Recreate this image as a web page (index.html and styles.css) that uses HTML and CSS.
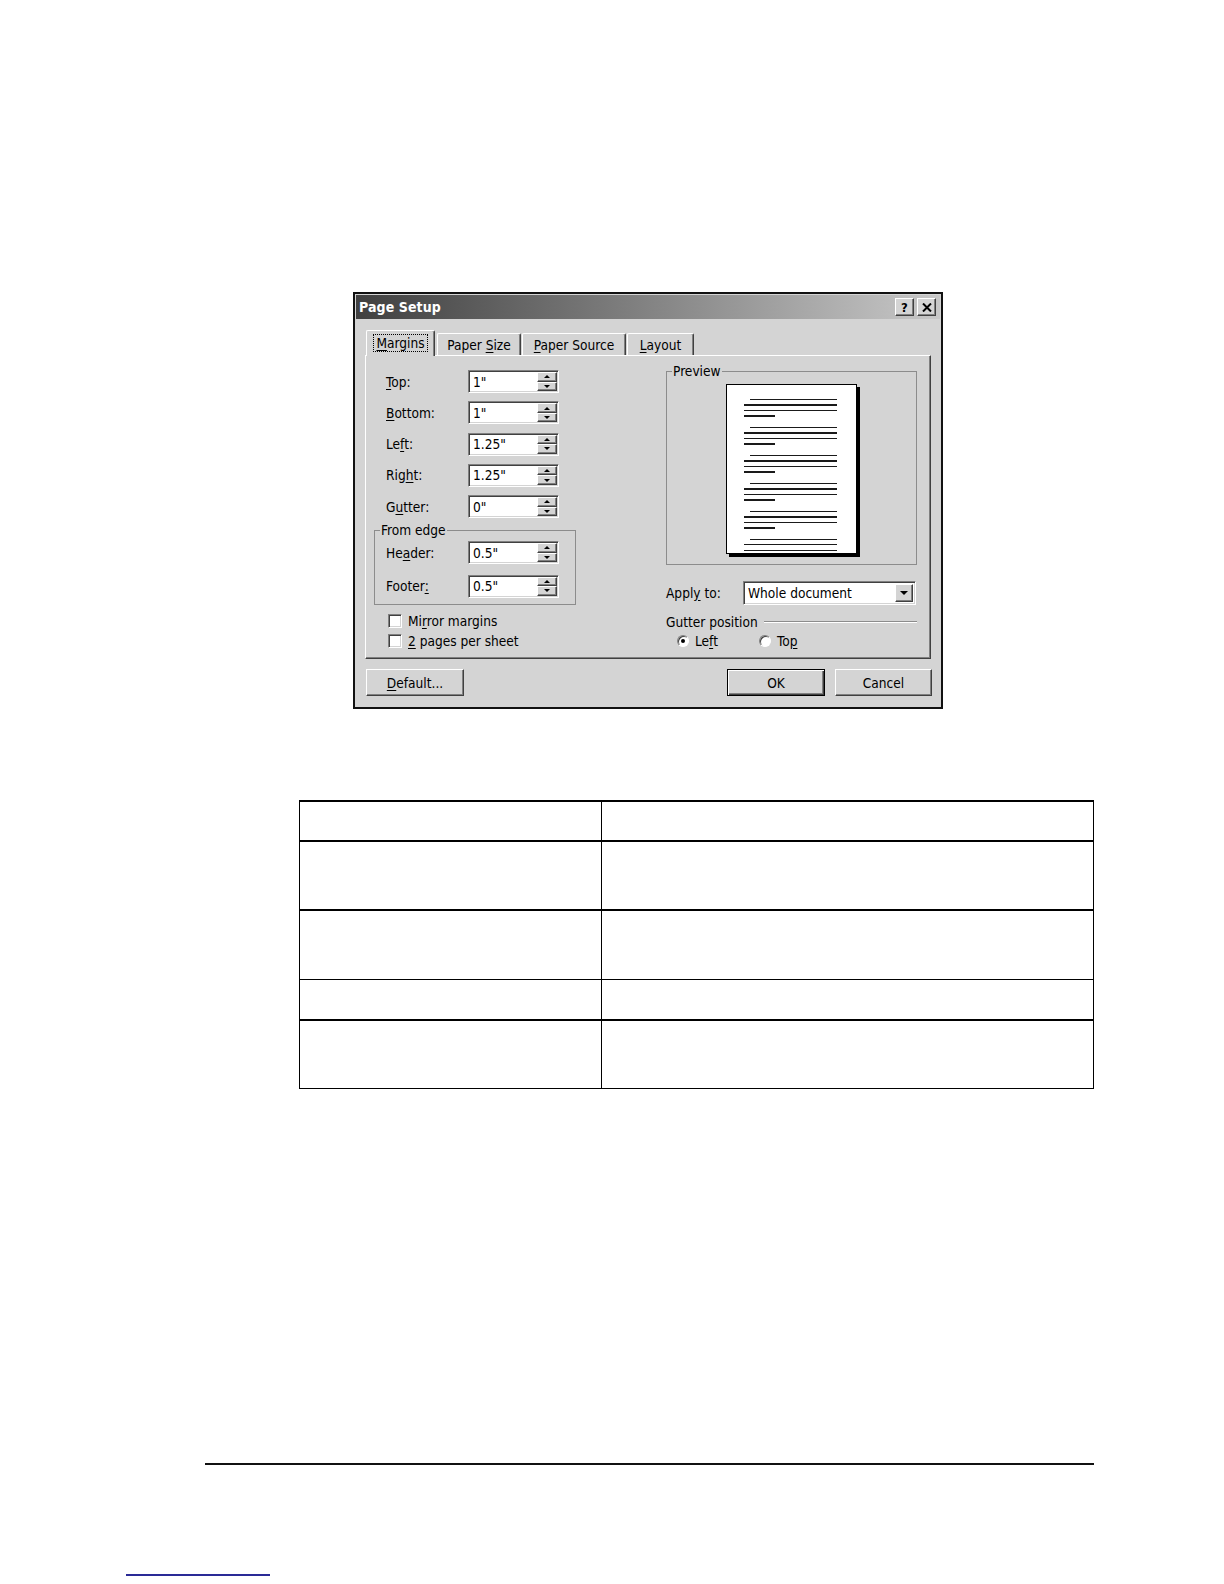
FILE: index.html
```html
<!DOCTYPE html>
<html>
<head>
<meta charset="utf-8">
<title>Page Setup</title>
<link rel="stylesheet" href="styles.css">
</head>
<body>
<div class="sheet">
  <div class="dialog">
    <div class="titlebar">
      <span class="title">Page Setup</span>
      <div class="tb-buttons">
        <span class="tb-btn help">?</span>
        <span class="tb-btn close"><svg width="10" height="9" viewBox="0 0 10 9"><path d="M1 0.5 L9 8.5 M9 0.5 L1 8.5" stroke="#000" stroke-width="2"/></svg></span>
      </div>
    </div>
    <div class="dlg-body">
      <div class="tabs">
        <div class="tab active w69"><span class="focus"><u>M</u>argins</span></div>
        <div class="tab w84 g2"><span>Paper <u>S</u>ize</span></div>
        <div class="tab w104 g1"><span><u>P</u>aper Source</span></div>
        <div class="tab w67 g1"><span><u>L</u>ayout</span></div>
      </div>
      <div class="panel">
        <div class="col-left">
          <div class="fields">
            <div class="field"><span class="lbl"><u>T</u>op:</span><div class="spin"><span class="val">1"</span><div class="spin-btns"><span class="sb up"></span><span class="sb down"></span></div></div></div>
            <div class="field"><span class="lbl"><u>B</u>ottom:</span><div class="spin"><span class="val">1"</span><div class="spin-btns"><span class="sb up"></span><span class="sb down"></span></div></div></div>
            <div class="field"><span class="lbl">Le<u>f</u>t:</span><div class="spin"><span class="val">1.25"</span><div class="spin-btns"><span class="sb up"></span><span class="sb down"></span></div></div></div>
            <div class="field"><span class="lbl">Rig<u>h</u>t:</span><div class="spin"><span class="val">1.25"</span><div class="spin-btns"><span class="sb up"></span><span class="sb down"></span></div></div></div>
            <div class="field"><span class="lbl">G<u>u</u>tter:</span><div class="spin"><span class="val">0"</span><div class="spin-btns"><span class="sb up"></span><span class="sb down"></span></div></div></div>
          </div>
          <fieldset class="group edge">
            <legend>From edge</legend>
            <div class="edge-fields">
              <div class="field"><span class="lbl">He<u>a</u>der:</span><div class="spin"><span class="val">0.5"</span><div class="spin-btns"><span class="sb up"></span><span class="sb down"></span></div></div></div>
              <div class="field"><span class="lbl">Footer<u>:</u></span><div class="spin"><span class="val">0.5"</span><div class="spin-btns"><span class="sb up"></span><span class="sb down"></span></div></div></div>
            </div>
          </fieldset>
          <div class="checks">
            <div class="check"><span class="cbox"></span><span>Mi<u>r</u>ror margins</span></div>
            <div class="check"><span class="cbox"></span><span><u>2</u> pages per sheet</span></div>
          </div>
        </div>
        <div class="col-right">
          <fieldset class="group preview">
            <legend>Preview</legend>
            <div class="page-wrap">
              <div class="page">
                <div class="para"><i class="ln ind"></i><i class="ln"></i><i class="ln"></i><i class="ln short"></i></div>
                <div class="para"><i class="ln ind"></i><i class="ln"></i><i class="ln"></i><i class="ln short"></i></div>
                <div class="para"><i class="ln ind"></i><i class="ln"></i><i class="ln"></i><i class="ln short"></i></div>
                <div class="para"><i class="ln ind"></i><i class="ln"></i><i class="ln"></i><i class="ln short"></i></div>
                <div class="para"><i class="ln ind"></i><i class="ln"></i><i class="ln"></i><i class="ln short"></i></div>
                <div class="para"><i class="ln ind"></i><i class="ln"></i><i class="ln"></i></div>
              </div>
            </div>
          </fieldset>
          <div class="apply">
            <span class="apply-lbl">Appl<u>y</u> to:</span>
            <div class="combo"><span class="val">Whole document</span><span class="combo-btn"></span></div>
          </div>
          <div class="gutter-pos"><span>Gutter position</span><span class="rule"></span></div>
          <div class="radios">
            <div class="radio first"><span class="rbtn on"></span><span>Le<u>f</u>t</span></div>
            <div class="radio"><span class="rbtn"></span><span>To<u>p</u></span></div>
          </div>
        </div>
      </div>
      <div class="buttons">
        <span class="btn default-btn"><span><u>D</u>efault...</span></span>
        <span class="spacer"></span>
        <span class="btn ok">OK</span>
        <span class="btn cancel">Cancel</span>
      </div>
    </div>
  </div>

  <table class="grid">
    <tr class="r1"><td class="c1"></td><td class="c2"></td></tr>
    <tr class="r2"><td class="c1"></td><td class="c2"></td></tr>
    <tr class="r3"><td class="c1"></td><td class="c2"></td></tr>
    <tr class="r4"><td class="c1"></td><td class="c2"></td></tr>
    <tr class="r5"><td class="c1"></td><td class="c2"></td></tr>
  </table>

  <div class="footer-rule"></div>
  <div class="blue-rule"></div>
</div>
</body>
</html>
```

FILE: styles.css
```css
* { box-sizing: border-box; }

html, body {
  margin: 0;
  padding: 0;
  background: #fff;
}

.sheet {
  width: 1224px;
  height: 1584px;
  padding-top: 292px;
  overflow: hidden;
  font-family: "DejaVu Sans Condensed", "DejaVu Sans", sans-serif;
  font-stretch: condensed;
  font-size: 13.6px;
  color: #000;
}

u { text-decoration: underline; text-underline-offset: 2px; }

/* ---------- dialog ---------- */
.dialog {
  margin-left: 353px;
  width: 590px;
  height: 417px;
  border: 2px solid #111;
  padding: 1px;
  background: #d4d4d4;
}

.titlebar {
  height: 24px;
  display: flex;
  align-items: center;
  padding: 0 4px 0 3px;
  background: linear-gradient(to right, #404040 0%, #7c7c7c 45%, #c8c8c8 100%);
}

.title {
  flex: 1;
  color: #fff;
  font-weight: bold;
  font-size: 14px;
  letter-spacing: 0.1px;
}

.tb-buttons {
  display: flex;
  gap: 3px;
}

.tb-btn {
  width: 19px;
  height: 18px;
  display: flex;
  align-items: center;
  justify-content: center;
  background: #d4d4d4;
  border: 1px solid;
  border-color: #fff #404040 #404040 #fff;
  box-shadow: inset -1px -1px 0 #808080;
  font-weight: bold;
  font-size: 13px;
  line-height: 1;
}

.dlg-body {
  padding: 11px 0 0 9px;
}

/* ---------- tabs ---------- */
.tabs {
  display: flex;
  align-items: flex-end;
  height: 25px;
  margin-left: 1px;
  position: relative;
  z-index: 1;
}

.tab {
  height: 22px;
  display: flex;
  align-items: center;
  justify-content: center;
  background: #d4d4d4;
  border-top: 1px solid #fff;
  border-left: 1px solid #fff;
  border-right: 1px solid #404040;
  box-shadow: inset -1px 0 0 #808080;
  border-radius: 2px 2px 0 0;
  padding-top: 1px;
}

.tab.active {
  height: 26px;
  margin-bottom: -1px;
  padding-bottom: 2px;
}

.w69 { width: 69px; }
.w67 { width: 67px; }
.w84 { width: 84px; }
.w104 { width: 104px; }
.g1 { margin-left: 1px; }
.g2 { margin-left: 2px; }

.focus {
  outline: 1px dotted #000;
  outline-offset: 0;
  padding: 0 2px;
}

/* ---------- panel ---------- */
.panel {
  width: 566px;
  height: 304px;
  display: flex;
  padding-left: 8px;
  border: 1px solid;
  border-color: #fff #404040 #404040 #fff;
  box-shadow: inset -1px -1px 0 #808080;
}

.col-left {
  width: 202px;
  padding-top: 14px;
}

.col-right {
  width: 251px;
  margin-left: 90px;
  padding-top: 7px;
}

.fields {
  display: flex;
  flex-direction: column;
  gap: 8.3px;
  padding-left: 12px;
}

.field {
  display: flex;
  align-items: center;
  height: 23px;
}

.lbl {
  width: 82px;
}

.spin {
  width: 91px;
  height: 23px;
  display: flex;
  align-items: center;
  background: #fff;
  border: 1px solid;
  border-color: #808080 #fff #fff #808080;
  box-shadow: inset 1px 1px 0 #404040, inset -1px -1px 0 #d4d4d4;
  padding: 1px 1px 1px 4px;
}

.val {
  flex: 1;
}

.spin-btns {
  width: 20px;
  height: 19px;
  display: flex;
  flex-direction: column;
}

.sb {
  flex: 1;
  background: #d4d4d4;
  border: 1px solid;
  border-color: #fff #404040 #404040 #fff;
  box-shadow: inset -1px -1px 0 #808080;
  display: flex;
  align-items: center;
  justify-content: center;
}

.sb::after {
  content: "";
  width: 0;
  height: 0;
  border-left: 3.5px solid transparent;
  border-right: 3.5px solid transparent;
}

.sb.up::after { border-bottom: 3.5px solid #000; }
.sb.down::after { border-top: 3.5px solid #000; }

/* group boxes */
.group {
  margin: 0;
  padding: 0;
  min-width: 0;
  border: 1px solid #8c8c8c;
}

.group legend {
  padding: 0 1px;
  margin-left: 5px;
  line-height: 16px;
}

.edge {
  margin-top: 4px;
  width: 202px;
  padding: 3px 0 6px 11px;
}

.edge legend {
  margin-left: -6px;
}

.edge-fields {
  display: flex;
  flex-direction: column;
  gap: 10.5px;
}

.checks {
  margin-top: 8px;
  padding-left: 14px;
  display: flex;
  flex-direction: column;
  gap: 4px;
}

.check {
  display: flex;
  align-items: center;
  height: 16px;
  gap: 6px;
}

.cbox {
  width: 14px;
  height: 14px;
  background: #fff;
  border: 1px solid;
  border-color: #808080 #fff #fff #808080;
  box-shadow: inset 1px 1px 0 #404040, inset -1px -1px 0 #d4d4d4;
}

/* preview */
.preview {
  width: 251px;
  padding: 5px 0 7px 0;
}

.page-wrap {
  display: flex;
  justify-content: center;
  height: 173px;
}

.page {
  width: 131px;
  height: 170px;
  background: #fff;
  border: 1px solid #000;
  box-shadow: 3px 3px 0 #000;
  padding: 14px 0 0 17px;
  display: flex;
  flex-direction: column;
  gap: 10.2px;
}

.para {
  display: flex;
  flex-direction: column;
  gap: 4.2px;
}

.ln {
  display: block;
  width: 93px;
  height: 1.3px;
  background: #1a1a1a;
}

.ln.ind { width: 87px; margin-left: 6px; }
.ln.short { width: 31px; }

.apply {
  margin-top: 16px;
  display: flex;
  align-items: center;
  height: 24px;
}

.apply-lbl { width: 77px; }

.combo {
  width: 173px;
  height: 24px;
  display: flex;
  align-items: center;
  background: #fff;
  border: 1px solid;
  border-color: #808080 #fff #fff #808080;
  box-shadow: inset 1px 1px 0 #404040, inset -1px -1px 0 #d4d4d4;
  padding: 2px 2px 2px 4px;
}

.combo-btn {
  width: 18px;
  height: 18px;
  background: #d4d4d4;
  border: 1px solid;
  border-color: #fff #404040 #404040 #fff;
  box-shadow: inset -1px -1px 0 #808080;
  display: flex;
  align-items: center;
  justify-content: center;
}

.combo-btn::after {
  content: "";
  border-left: 4px solid transparent;
  border-right: 4px solid transparent;
  border-top: 4px solid #000;
}

.gutter-pos {
  margin-top: 9px;
  height: 16px;
  display: flex;
  align-items: center;
}

.gutter-pos .rule {
  flex: 1;
  margin-left: 6px;
  border-top: 1px solid #8c8c8c;
  border-bottom: 1px solid #fff;
  height: 2px;
}

.radios {
  margin-top: 3px;
  height: 16px;
  display: flex;
  align-items: center;
  padding-left: 11px;
}

.radio {
  display: flex;
  align-items: center;
  gap: 6px;
}

.radio.first { width: 82px; }

.rbtn {
  width: 12px;
  height: 12px;
  border-radius: 50%;
  background: #fff;
  border: 1px solid;
  border-color: #808080 #fff #fff #808080;
  box-shadow: inset 1px 1px 0 #404040;
  display: flex;
  align-items: center;
  justify-content: center;
}

.rbtn.on::after {
  content: "";
  width: 4px;
  height: 4px;
  border-radius: 50%;
  background: #000;
}

/* buttons */
.buttons {
  margin-top: 10px;
  margin-left: 1px;
  width: 566px;
  display: flex;
  align-items: center;
  gap: 10px;
}

.spacer { flex: 1; }

.btn {
  width: 98px;
  height: 27px;
  display: flex;
  align-items: center;
  justify-content: center;
  background: #d4d4d4;
  border: 1px solid;
  border-color: #fff #404040 #404040 #fff;
  box-shadow: inset -1px -1px 0 #808080;
}

.btn.default-btn { margin-right: -10px; }
.btn.cancel { width: 97px; }

.btn.ok {
  border: 1px solid #000;
  box-shadow: inset 1px 1px 0 #fff, inset -1px -1px 0 #404040, inset -2px -2px 0 #808080;
}

/* ---------- table ---------- */
.grid {
  margin-top: 91px;
  margin-left: 299px;
  width: 795px;
  border-collapse: collapse;
  table-layout: fixed;
}

.grid td {
  padding: 0;
  border-left: 1px solid #000;
  border-right: 1px solid #000;
}

.grid .c1 { width: 302px; }

.grid .r1 td { height: 40px; border-top: 2px solid #000; border-bottom: 2px solid #000; }
.grid .r2 td { height: 69px; border-bottom: 2px solid #000; }
.grid .r3 td { height: 69px; border-bottom: 1px solid #000; }
.grid .r4 td { height: 41px; border-bottom: 2px solid #000; }
.grid .r5 td { height: 68px; border-bottom: 1px solid #000; }

.footer-rule {
  margin-top: 374px;
  margin-left: 205px;
  width: 889px;
  height: 2px;
  background: #111;
}

.blue-rule {
  margin-top: 109px;
  margin-left: 126px;
  width: 144px;
  height: 2px;
  background: #2a2a96;
}
```
